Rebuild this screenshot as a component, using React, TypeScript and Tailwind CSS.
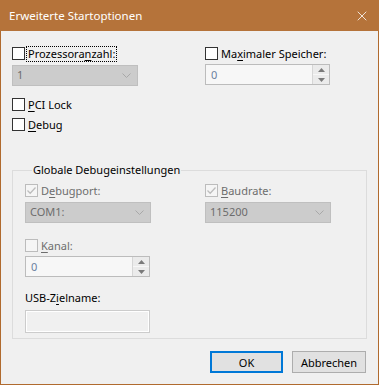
import type { ReactNode } from 'react';
import { X } from 'lucide-react';

const font = { fontFamily: '"Segoe UI", "Noto Sans", sans-serif' };

function Check({ checked = false, disabled = false }: { checked?: boolean; disabled?: boolean }) {
  return (
    <span
      className={`w-[13px] h-[13px] shrink-0 border flex items-center justify-center ${
        disabled ? 'border-[#bcbcbc] bg-[#f5f5f5]' : 'border-[#333333] bg-white'
      }`}
    >
      {checked && (
        <svg width="11" height="11" viewBox="0 0 11 11">
          <path d="M1.5 5.5 L4.2 8.2 L9.5 2.5" fill="none" stroke="#bcbcbc" strokeWidth="1.3" />
        </svg>
      )}
    </span>
  );
}

function CheckLabel({ children, checked, disabled, focus }: { children: ReactNode; checked?: boolean; disabled?: boolean; focus?: boolean }) {
  return (
    <div className="flex items-center h-[15px]">
      <Check checked={checked} disabled={disabled} />
      <span
        className={`ml-[2px] px-px leading-[14px] ${disabled ? 'text-[#6d6d6d]' : 'text-black'} ${
          focus ? 'outline outline-1 outline-dotted outline-black' : ''
        }`}
      >
        {children}
      </span>
    </div>
  );
}

function Combo({ value }: { value: string }) {
  return (
    <div className="w-[126px] h-[21px] bg-[#cccccc] border border-[#bfbfbf] flex items-center pl-[4px] pr-[6px] text-[#6d6d6d]">
      <span className="flex-1">{value}</span>
      <svg width="9" height="6" viewBox="0 0 9 6">
        <path d="M0.5 0.5 L4.5 4.5 L8.5 0.5" fill="none" stroke="#a8a8a8" strokeWidth="1" />
      </svg>
    </div>
  );
}

function Spin({ value }: { value: string }) {
  return (
    <div className="w-[125px] h-[21px] border border-[#bcbcbc] bg-[#f7f7f7] flex">
      <span className="flex-1 pl-[5px] leading-[19px] text-[#6a80a0]">{value}</span>
      <div className="w-[17px] flex flex-col border-l border-[#d6d6d6]">
        <div className="flex-1 flex items-center justify-center bg-[#ebebeb] border-b border-[#f7f7f7]">
          <svg width="7" height="4" viewBox="0 0 7 4"><path d="M0 4 L3.5 0 L7 4 Z" fill="#7a7a7a" /></svg>
        </div>
        <div className="flex-1 flex items-center justify-center bg-[#ebebeb]">
          <svg width="7" height="4" viewBox="0 0 7 4"><path d="M0 0 L3.5 4 L7 0 Z" fill="#7a7a7a" /></svg>
        </div>
      </div>
    </div>
  );
}

const U = ({ children }: { children: ReactNode }) => <span className="underline underline-offset-2">{children}</span>;

export default function App() {
  return (
    <div
      className="w-[379px] h-[385px] border border-t-0 border-[#b06a2e] bg-[#f0f0f0] flex flex-col text-[11px] text-black"
      style={font}
    >
      <div className="h-[31px] bg-[#b5733a] flex items-center shrink-0 -mx-px">
        <span className="ml-[9px] flex-1 text-white text-[11.5px] leading-none">Erweiterte Startoptionen</span>
        <X size={16} strokeWidth={1.2} className="text-white mr-[9px]" />
      </div>

      <div className="flex-1 flex flex-col px-[11px] pt-[15px]">
        <div className="flex">
          <div className="w-[193px] flex flex-col">
            <CheckLabel focus>
              Prozessora<U>n</U>zahl:
            </CheckLabel>
            <div className="mt-[4px]">
              <Combo value="1" />
            </div>
            <div className="mt-[11px]">
              <CheckLabel>
                <U>P</U>CI Lock
              </CheckLabel>
            </div>
            <div className="mt-[5px]">
              <CheckLabel>
                <U>D</U>ebug
              </CheckLabel>
            </div>
          </div>
          <div className="flex flex-col">
            <CheckLabel>
              Ma<U>x</U>imaler Speicher:
            </CheckLabel>
            <div className="mt-[3px]">
              <Spin value="0" />
            </div>
          </div>
        </div>

        <fieldset className="mt-[31px] h-[176px] border border-[#dcdcdc] px-[12px] pb-0 pt-[8px] min-w-0">
          <legend className="px-[1px] ml-[7px] -mb-[2px] leading-[14px]">Globale Debugeinstellungen</legend>
          <div className="flex">
            <div className="w-[180px] flex flex-col">
              <CheckLabel checked disabled>
                D<U>e</U>bugport:
              </CheckLabel>
              <div className="mt-[4px]">
                <Combo value="COM1:" />
              </div>
              <div className="mt-[15px]">
                <CheckLabel disabled>
                  <U>K</U>anal:
                </CheckLabel>
              </div>
              <div className="mt-[3px]">
                <Spin value="0" />
              </div>
              <div className="mt-[14px] leading-[14px]">
                USB-Z<U>i</U>elname:
              </div>
              <div className="mt-[5px] w-[125px] h-[23px] border border-[#cccccc] bg-[#f0f0f0] shadow-[inset_0_0_0_1px_#ffffff]" />
            </div>
            <div className="flex flex-col">
              <CheckLabel checked disabled>
                <U>B</U>audrate:
              </CheckLabel>
              <div className="mt-[4px]">
                <Combo value="115200" />
              </div>
            </div>
          </div>
        </fieldset>

        <div className="flex justify-end mt-[12px] gap-[9px] mr-px">
          <button className="w-[73px] h-[22px] bg-[#e1e1e1] border-2 border-[#0078d7] leading-none">OK</button>
          <button className="w-[74px] h-[22px] bg-[#e1e1e1] border border-[#adadad] leading-none">Abbrechen</button>
        </div>
      </div>
    </div>
  );
}
